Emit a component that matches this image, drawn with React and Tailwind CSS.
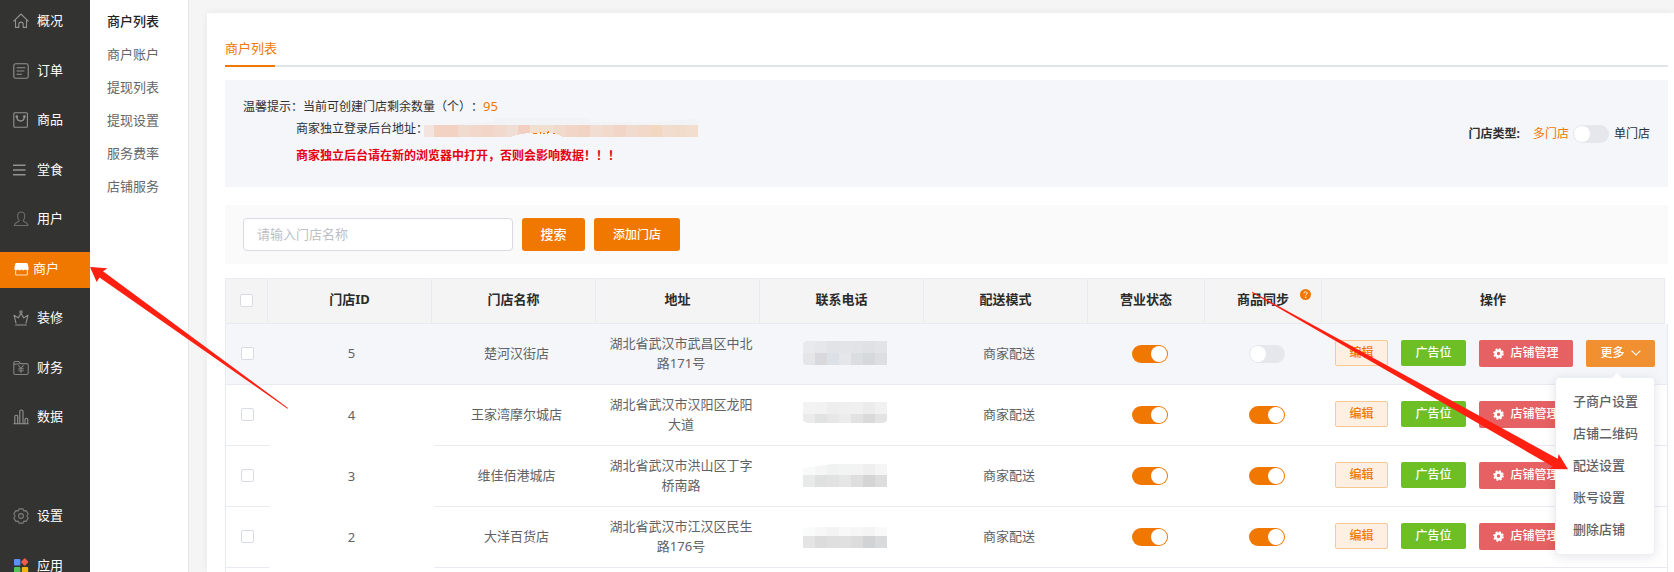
// Merchant list — admin page with side navigation, notice, search bar and store table.
import React, { useState } from 'react';

const ORANGE = '#f07700';

// 16px outline icons of the main navigation
function Icon({ children, color = '#929290' }) {
  return (
    <svg
      width="16"
      height="16"
      viewBox="0 0 16 16"
      fill="none"
      stroke={color}
      strokeWidth="1.1"
      strokeLinejoin="round"
      strokeLinecap="round"
      className="shrink-0"
      aria-hidden="true"
    >
      {children}
    </svg>
  );
}

const ICONS = {
  home: (
    <Icon>
      <path d="M.8 8.2 8 1l7.200 7.200M2.500 7.300V14.400H5.800V11.300a2.200 2.200 0 0 1 4.400 0V14.400H13.500V7.300" />
    </Icon>
  ),
  order: (
    <Icon>
      <rect x=".8" y=".8" width="14.400" height="14.400" rx="1.800" />
      <path d="M4 4.800h8M4 8h7M4 11.200h4.500" />
    </Icon>
  ),
  goods: (
    <Icon>
      <rect x=".8" y=".8" width="13.600" height="14.400" rx="1" />
      <path d="M3.800 4.800c.4 5.600 7.200 5.600 7.600 0" strokeWidth="1.400" />
      <circle cx="3.800" cy="4.600" r=".8" fill="#929290" />
      <circle cx="11.400" cy="4.600" r=".8" fill="#929290" />
    </Icon>
  ),
  dine: (
    <Icon>
      <path d="M0 3.200h12.500M0 8h12.500M0 12.800h12.500" strokeWidth="1.500" strokeLinecap="butt" />
    </Icon>
  ),
  user: (
    <Icon color="#6e6e6c">
      <path d="M6.300 9.800C3.600 7 3.900 1 8.200 1s4.600 6 1.900 8.800c0 1 4.700 1.400 4.900 4.700H1.400c.2-3.300 4.900-3.700 4.900-4.700Z" />
    </Icon>
  ),
  shop: (
    <Icon color="#fff">
      <path
        d="M3.600 2h9.800c.8 0 1.200.4 1.400 1.100l.9 4.400c0 2.300-3 2.500-3.600.8-.7 1.500-2.900 1.500-3.600 0-.7 1.500-2.900 1.500-3.600 0-.7 1.700-3.600 1.500-3.600-.8l.9-4.400C2.400 2.400 2.800 2 3.600 2Z"
        fill="#fff"
        stroke="none"
      />
      <path d="M2.600 10v3c0 .7.400 1 1 1h9.800c.6 0 1-.3 1-1v-3" strokeOpacity=".75" />
    </Icon>
  ),
  crown: (
    <Icon>
      <path d="M3 13.200 1 5.200l4.300 2.700L8 3.300l2.700 4.600L15 5.200l-2 8M2.600 15h10.800" />
      <circle cx="8" cy="2" r="1.200" />
    </Icon>
  ),
  finance: (
    <Icon color="#838381">
      <path d="M.8 13V2.800C.8 2 1.200 1.500 2 1.500h3.800L7.500 3.600h6c1 0 1.700.6 1.700 1.500v8c0 .9-.6 1.400-1.500 1.400H2.300C1.400 14.500.8 14 .8 13ZM.8 4.400 6 3.800" />
      <path d="m5.700 5.500 2.300 3 2.300-3M5.700 8.700h4.600M5.700 10.700h4.600M8 8.500v4" />
    </Icon>
  ),
  chart: (
    <Icon>
      <path d="M.8 14.800h14.400M1.800 14.800V7.500c0-1.700 2.900-1.700 2.900 0v7.300M6.800 14.800V2.300c0-1.700 3.200-1.700 3.200 0v12.500M12 14.800v-4.500c0-1.500 2.700-1.500 2.700 0v4.500" />
    </Icon>
  ),
  setting: (
    <Icon color="#7e7e7c">
      <path d="M6 .9h4l.9 2 2.300-.3 2 3.400L13.800 8l1.400 2-2 3.400-2.300-.3-.9 2H6l-.9-2-2.300.3-2-3.400L2.200 8 .8 6l2-3.400 2.300.3Z" />
      <circle cx="8" cy="8" r="2.400" />
    </Icon>
  ),
  apps: (
    <svg width="16" height="16" viewBox="0 0 16 16" className="shrink-0" aria-hidden="true">
      <rect x="1" y="1" width="6.400" height="6.400" rx="1" fill="#5b8ff9" />
      <rect x="8.900" y="1.200" width="5.600" height="5.600" rx=".8" fill="#ee5c4b" transform="rotate(45 11.700 4)" />
      <rect x="1" y="9" width="6.400" height="6.400" rx="1" fill="#52c15a" />
      <rect x="8.800" y="9" width="6.400" height="6.400" rx="1" fill="#f5b50f" />
    </svg>
  ),
};

const NAV = [
  { key: 'home', label: '概况' },
  { key: 'order', label: '订单' },
  { key: 'goods', label: '商品' },
  { key: 'dine', label: '堂食' },
  { key: 'user', label: '用户' },
  { key: 'shop', label: '商户', active: true },
  { key: 'crown', label: '装修' },
  { key: 'finance', label: '财务' },
  { key: 'chart', label: '数据' },
];

const NAV_BOTTOM = [
  { key: 'setting', label: '设置' },
  { key: 'apps', label: '应用' },
];

const SUB_NAV = ['商户列表', '商户账户', '提现列表', '提现设置', '服务费率', '店铺服务'];

const MORE_ITEMS = ['子商户设置', '店铺二维码', '配送设置', '账号设置', '删除店铺'];

const STORES = [
  {
    id: 5,
    name: '楚河汉街店',
    address: '湖北省武汉市武昌区中北路171号',
    sync: false,
    mask: {
      cover: 'M3 0H84V24H2L0 22V2Z',
      rows: [
        ['#e8e9eb', '#e6e7ea', '#e1e3e6', '#e2e4e7', '#e1e3e6', '#dfe1e4', '#e2e3e6'],
        ['#e5e5e8', '#d9d9dc', '#dce0e7', '#e4e6e9', '#dadee0', '#d6d9db', '#dddee2'],
      ],
    },
  },
  {
    id: 4,
    name: '王家湾摩尔城店',
    address: '湖北省武汉市汉阳区龙阳大道',
    sync: true,
    mask: {
      cover: 'M0 0H84V19L80 21H5L0 19Z',
      rows: [
        ['#f3f3f3', '#f2f2f2', '#eeeeee', '#efefef', '#f0f0f0', '#ececec', '#f1f1f1'],
        ['#ebebeb', '#e1e2e2', '#e7e7e7', '#ececec', '#e2e2e2', '#dadada', '#e3e3e3'],
      ],
    },
  },
  {
    id: 3,
    name: '维佳佰港城店',
    address: '湖北省武汉市洪山区丁字桥南路',
    sync: true,
    mask: {
      cover: 'M0 5 30 1H84V24H0Z',
      rows: [
        ['#f8f9f9', '#f5f5f5', '#f0f1f1', '#f2f3f3', '#f3f3f3', '#efefef', '#f5f5f5'],
        ['#e8eae9', '#dfe1e0', '#e2e2e2', '#e6e6e6', '#dedede', '#d5d5d6', '#dddddd'],
      ],
    },
  },
  {
    id: 2,
    name: '大洋百货店',
    address: '湖北省武汉市江汉区民生路176号',
    sync: true,
    mask: {
      cover: 'M0 5 4 3H84V24H0Z',
      rows: [
        ['#fafbfb', '#f7f7f7', '#f3f3f3', '#f8f8f8', '#f6f6f6', '#f4f4f4', '#f9f9f9'],
        ['#e4e4e5', '#dcdcdc', '#dfdfdf', '#e0e0e0', '#dcdcdc', '#d2d3d5', '#d9dadb'],
      ],
    },
  },
];

const URL_MASK = [
  '#f3e4df', '#f2d3c3', '#f2d3c3', '#f1dace', '#f1d8cb', '#f2d5c6', '#f1dacd', '#f0ded4',
  '#f2cfc0', '#f1e0d0', '#f1dfd0', '#f1d9cc', '#f1d6c7', '#f1d3c3', '#f1ddd1', '#f1dacc',
  '#f1d5c7', '#f1dbce', '#f1d8c8', '#f2d8c0', '#f1dccd', '#f1dccb', '#f1decf',
];

function NavItem({ item }) {
  return (
    <li>
      <a
        href={`#${item.key}`}
        className={[
          'flex h-9 items-center pb-0.5 pl-[13px] text-[13px] text-white',
          item.active ? 'gap-1 bg-[#f07700]' : 'gap-2',
        ].join(' ')}
      >
        {ICONS[item.key]}
        {item.label}
      </a>
    </li>
  );
}

function Switch({ label, defaultChecked }) {
  return (
    <input
      type="checkbox"
      role="switch"
      aria-label={label}
      defaultChecked={defaultChecked}
      className="block h-[18px] w-9 shrink-0 cursor-pointer appearance-none rounded-full bg-[#e5e7ec] p-px before:block before:size-4 before:rounded-full before:bg-white checked:bg-[#f07700] checked:before:ml-auto"
    />
  );
}

function Tick({ label }) {
  return (
    <input
      type="checkbox"
      aria-label={label}
      className="block size-[13px] shrink-0 cursor-pointer appearance-none rounded-xs border border-[#d8dbe5] bg-white checked:bg-[#f07700]"
    />
  );
}

function Mosaic({ id, mask }) {
  return (
    <svg width="84" height="24" viewBox="0 0 84 24" shapeRendering="crispEdges" role="img" aria-label="已隐藏">
      <clipPath id={id}>
        <path d={mask.cover} />
      </clipPath>
      <g clipPath={`url(#${id})`}>
        {mask.rows.map((row, y) =>
          row.map((c, x) => <rect key={`${x}-${y}`} x={x * 12} y={y * 12} width="12" height="12" fill={c} />)
        )}
      </g>
    </svg>
  );
}

function Gear() {
  return (
    <svg width="11" height="11" viewBox="0 0 12 12" aria-hidden="true">
      <circle cx="6" cy="6" r="3.200" fill="none" stroke="#fff" strokeWidth="2.800" />
      <circle cx="6" cy="6" r="4.900" fill="none" stroke="#fff" strokeWidth="1.800" strokeDasharray="2.100 1.750" />
    </svg>
  );
}

function MoreMenu() {
  return (
    <div className="absolute top-[37px] right-0 z-10 w-[100px] rounded border border-[#ebeef5] bg-white py-2 shadow-[0_2px_12px_rgba(0,0,0,0.1)]">
      <svg width="12" height="6" viewBox="0 0 12 6" className="absolute -top-[5px] left-[55px]" aria-hidden="true">
        <path d="M0 6 6 0l6 6Z" fill="#fff" />
      </svg>
      <ul>
        {MORE_ITEMS.map((t) => (
          <li key={t}>
            <button type="button" className="block h-8 w-full pl-[17px] text-left text-[13px] whitespace-nowrap text-[#606266]">
              {t}
            </button>
          </li>
        ))}
      </ul>
    </div>
  );
}

function RowActions({ open, onToggle }) {
  return (
    <div className="flex items-start gap-[13px] text-xs font-medium whitespace-nowrap">
      <button type="button" className="h-[26px] w-[53px] shrink-0 rounded-xs border border-[#f7c891] bg-[#fdefe2] text-[#f07700]">
        编辑
      </button>
      <button type="button" className="h-[26px] w-[65px] shrink-0 rounded-xs bg-[#6ebe26] text-white">
        广告位
      </button>
      <button
        type="button"
        className="flex h-[27px] w-[94px] shrink-0 items-center justify-center gap-1.5 rounded-xs bg-[#e56163] text-white"
      >
        <Gear />
        店铺管理
      </button>
      <div className="relative shrink-0">
        <button
          type="button"
          aria-expanded={open}
          onClick={onToggle}
          className="flex h-[27px] w-[69px] items-center justify-center gap-1.5 rounded-xs bg-[#f19031] text-white"
        >
          更多
          <svg width="10" height="6" viewBox="0 0 10 6" fill="none" stroke="#fff" strokeWidth="1.100" aria-hidden="true">
            <path d="m.6.600 4.400 4.400L9.400.6" />
          </svg>
        </button>
        {open && <MoreMenu />}
      </div>
    </div>
  );
}

function HeadCols() {
  return (
    <colgroup>
      <col className="w-[42px]" />
      <col className="w-[164px]" />
      <col className="w-[164px]" />
      <col className="w-[164px]" />
      <col className="w-[164px]" />
      <col className="w-[164px]" />
      <col className="w-[117px]" />
      <col className="w-[117px]" />
      <col />
    </colgroup>
  );
}

function BodyCols() {
  return (
    <colgroup>
      <col className="w-[43px]" />
      <col className="w-[165px]" />
      <col className="w-[165px]" />
      <col className="w-[164px]" />
      <col className="w-[164px]" />
      <col className="w-[164px]" />
      <col className="w-[117px]" />
      <col className="w-[117px]" />
      <col />
    </colgroup>
  );
}

const TH = 'h-[45px] border-r border-b border-[#e8eaf3] px-0 pt-0 pb-0.5 text-center font-bold';
const TD = 'h-[61px] border-b border-[#e8eaf3] px-2.5 py-0 text-center';
const TD_UP = 'h-[61px] border-b border-[#e8eaf3] px-2.5 pt-0 pb-0.5 text-center leading-5';

function StoreTable() {
  const [openId, setOpenId] = useState(5);

  return (
    <div className="mt-3.5 flex flex-1 flex-col text-[13px]">
      <div className="mr-[3px] shrink-0 border-t border-l border-[#e8eaf3]">
        <table className="w-full table-fixed border-separate border-spacing-0 bg-[#f4f4f4] text-[#2b2b2b]">
          <HeadCols />
          <thead>
            <tr>
              <th className={TH}>
                <div className="flex justify-center">
                  <Tick label="全选" />
                </div>
              </th>
              <th className={TH}>门店ID</th>
              <th className={TH}>门店名称</th>
              <th className={TH}>地址</th>
              <th className={TH}>联系电话</th>
              <th className={TH}>配送模式</th>
              <th className={TH}>营业状态</th>
              <th className={`${TH} relative`}>
                商品同步
                <svg width="11" height="11" viewBox="0 0 11 11" className="absolute top-2.5 right-2.5" aria-hidden="true">
                  <circle cx="5.500" cy="5.500" r="5.500" fill={ORANGE} />
                  <path d="M4 4.300c0-2.100 3.100-2.100 3.100-.1 0 1.200-1.500 1.200-1.500 2.400" fill="none" stroke="#fff" />
                  <circle cx="5.600" cy="8.200" r=".7" fill="#fff" />
                </svg>
              </th>
              <th className={TH}>操作</th>
            </tr>
          </thead>
        </table>
      </div>

      <div className="flex-1 border-x border-[#e8eaf3]">
        <table className="w-full table-fixed border-separate border-spacing-0 text-[#606266]">
          <BodyCols />
          <tbody>
            {STORES.map((s, i) => (
              <tr key={s.id} className={i === 0 ? 'bg-[#f4f6fa]' : 'bg-white'}>
                <td className={TD_UP}>
                  <div className="flex justify-center">
                    <Tick label={`选择${s.name}`} />
                  </div>
                </td>
                <td className={i === 0 ? TD : 'h-[61px] px-2.5 py-0 text-center'}>{s.id}</td>
                <td className={TD}>{s.name}</td>
                <td className={TD_UP}>{s.address}</td>
                <td className={TD_UP}>
                  <div className="flex justify-center">
                    <Mosaic id={`mask-${s.id}`} mask={s.mask} />
                  </div>
                </td>
                <td className={TD}>商家配送</td>
                <td className={TD}>
                  <div className="flex justify-center">
                    <Switch label="营业状态" defaultChecked />
                  </div>
                </td>
                <td className={TD}>
                  <div className="flex justify-center">
                    <Switch label="商品同步" defaultChecked={s.sync} />
                  </div>
                </td>
                <td className={TD_UP}>
                  <RowActions open={openId === s.id} onToggle={() => setOpenId(openId === s.id ? null : s.id)} />
                </td>
              </tr>
            ))}
          </tbody>
        </table>
      </div>
    </div>
  );
}

function Notice() {
  return (
    <section className="mt-[13px] flex h-[107px] shrink-0 items-center justify-between bg-[#f4f6fa] px-[18px] text-xs text-[#2f2f2f] [text-spacing-trim:space-all]">
      <div className="self-start pt-4">
        <p className="flex h-[22px] items-center">
          温馨提示：当前可创建门店剩余数量（个）：
          <span className="text-[13px] text-[#f07700]">95</span>
        </p>
        <p className="flex h-[22px] items-center pl-[53px]">
          商家独立登录后台地址：
          <svg width="276" height="22" viewBox="0 0 276 22" className="-ml-1" shapeRendering="crispEdges" role="img" aria-label="已隐藏">
            <path d="M14 8 70 3V0h96v4h60l48-3v8H14Z" fill="#f1f3f6" />
            {URL_MASK.map((c, i) => (
              <rect key={i} x={i * 12 - 2} y="7" width="12" height="12" fill={c} />
            ))}
            <path d="M84 19.500 95 16.500 104 15h26l10 4.500Z" fill="#f4f6fa" />
            <path d="M109 15h4M116 14v2M119 15h2M123 16l2-3M129 15h2" stroke={ORANGE} />
          </svg>
        </p>
        <p className="flex h-8 items-center pl-[53px] font-bold text-[#e60012]">
          商家独立后台请在新的浏览器中打开，否则会影响数据！！！
        </p>
      </div>
      <div className="flex items-center">
        <span className="mr-[13px] font-bold">门店类型:</span>
        <span className="mr-1 text-[#f07700]">多门店</span>
        <Switch label="门店类型" />
        <span className="ml-[5px]">单门店</span>
      </div>
    </section>
  );
}

function SearchBar() {
  return (
    <form
      onSubmit={(e) => e.preventDefault()}
      className="mt-[18px] flex h-[59px] shrink-0 items-center gap-[9px] bg-[#fafafa] px-[18px]"
    >
      <input
        type="text"
        aria-label="门店名称"
        placeholder="请输入门店名称"
        className="h-[33px] w-[270px] rounded border border-[#d9dae6] bg-white px-[13px] pb-0.5 text-[13px] text-[#606266] placeholder:text-[#bcbfc6]"
      />
      <button type="submit" className="h-[33px] w-[63px] rounded-[3px] bg-[#f07700] text-[13px] font-medium text-white">
        搜索
      </button>
      <button type="button" className="h-[33px] w-[86px] rounded-[3px] bg-[#f07700] text-xs font-medium text-white">
        添加门店
      </button>
    </form>
  );
}

// Hand-drawn pointers: to the active nav entry and to the delivery settings entry
function Pointers() {
  return (
    <svg className="pointer-events-none absolute inset-0 z-20 h-full w-full" fill="#ff2012" aria-hidden="true">
      <path d="M90 267 107.500 268.200 103 271.200 288 408 287.500 408.700 99.500 277.500 96.700 282Z" />
      <path d="M1568 469.300 1558.700 454 1557.700 458.700 1252.300 291.700 1252 292.700 1552.700 466.500 1549.300 469Z" />
    </svg>
  );
}

export default function App() {
  return (
    <div className="relative flex h-screen overflow-hidden bg-[#f5f5f5] font-['Noto_Sans','Noto_Sans_CJK_SC',sans-serif]">
      <nav aria-label="主导航" className="w-[90px] shrink-0 bg-[#333331] pt-1">
        <ul className="flex h-[432px] flex-col justify-between">
          {NAV.map((item) => (
            <NavItem key={item.key} item={item} />
          ))}
        </ul>
        <ul className="mt-[63px] flex flex-col gap-3.5">
          {NAV_BOTTOM.map((item) => (
            <NavItem key={item.key} item={item} />
          ))}
        </ul>
      </nav>

      <nav aria-label="商户" className="w-[99px] shrink-0 border-r border-[#e7e7e7] bg-white pt-[5px]">
        <ul>
          {SUB_NAV.map((t, i) => (
            <li key={t}>
              <a
                href={`#sub-${i}`}
                className={[
                  'flex h-[33px] items-center pl-[17px] text-[13px]',
                  i === 0 ? 'font-medium text-[#222222]' : 'text-[#666666]',
                ].join(' ')}
              >
                {t}
              </a>
            </li>
          ))}
        </ul>
      </nav>

      <main className="mt-[13px] ml-[18px] flex min-w-0 flex-1 flex-col bg-white pr-1.5 pl-[18px] shadow-[0_0_8px_rgba(0,0,0,0.06)]">
        <div className="flex h-[54px] shrink-0 items-end border-b-2 border-[#e1e4ea]">
          <a
            href="#list"
            className="-mb-0.5 flex h-[34px] w-[50px] items-center border-b-2 border-[#f07700] text-[13px] whitespace-nowrap text-[#f07700]"
          >
            商户列表
          </a>
        </div>
        <Notice />
        <SearchBar />
        <StoreTable />
      </main>

      <Pointers />
    </div>
  );
}
